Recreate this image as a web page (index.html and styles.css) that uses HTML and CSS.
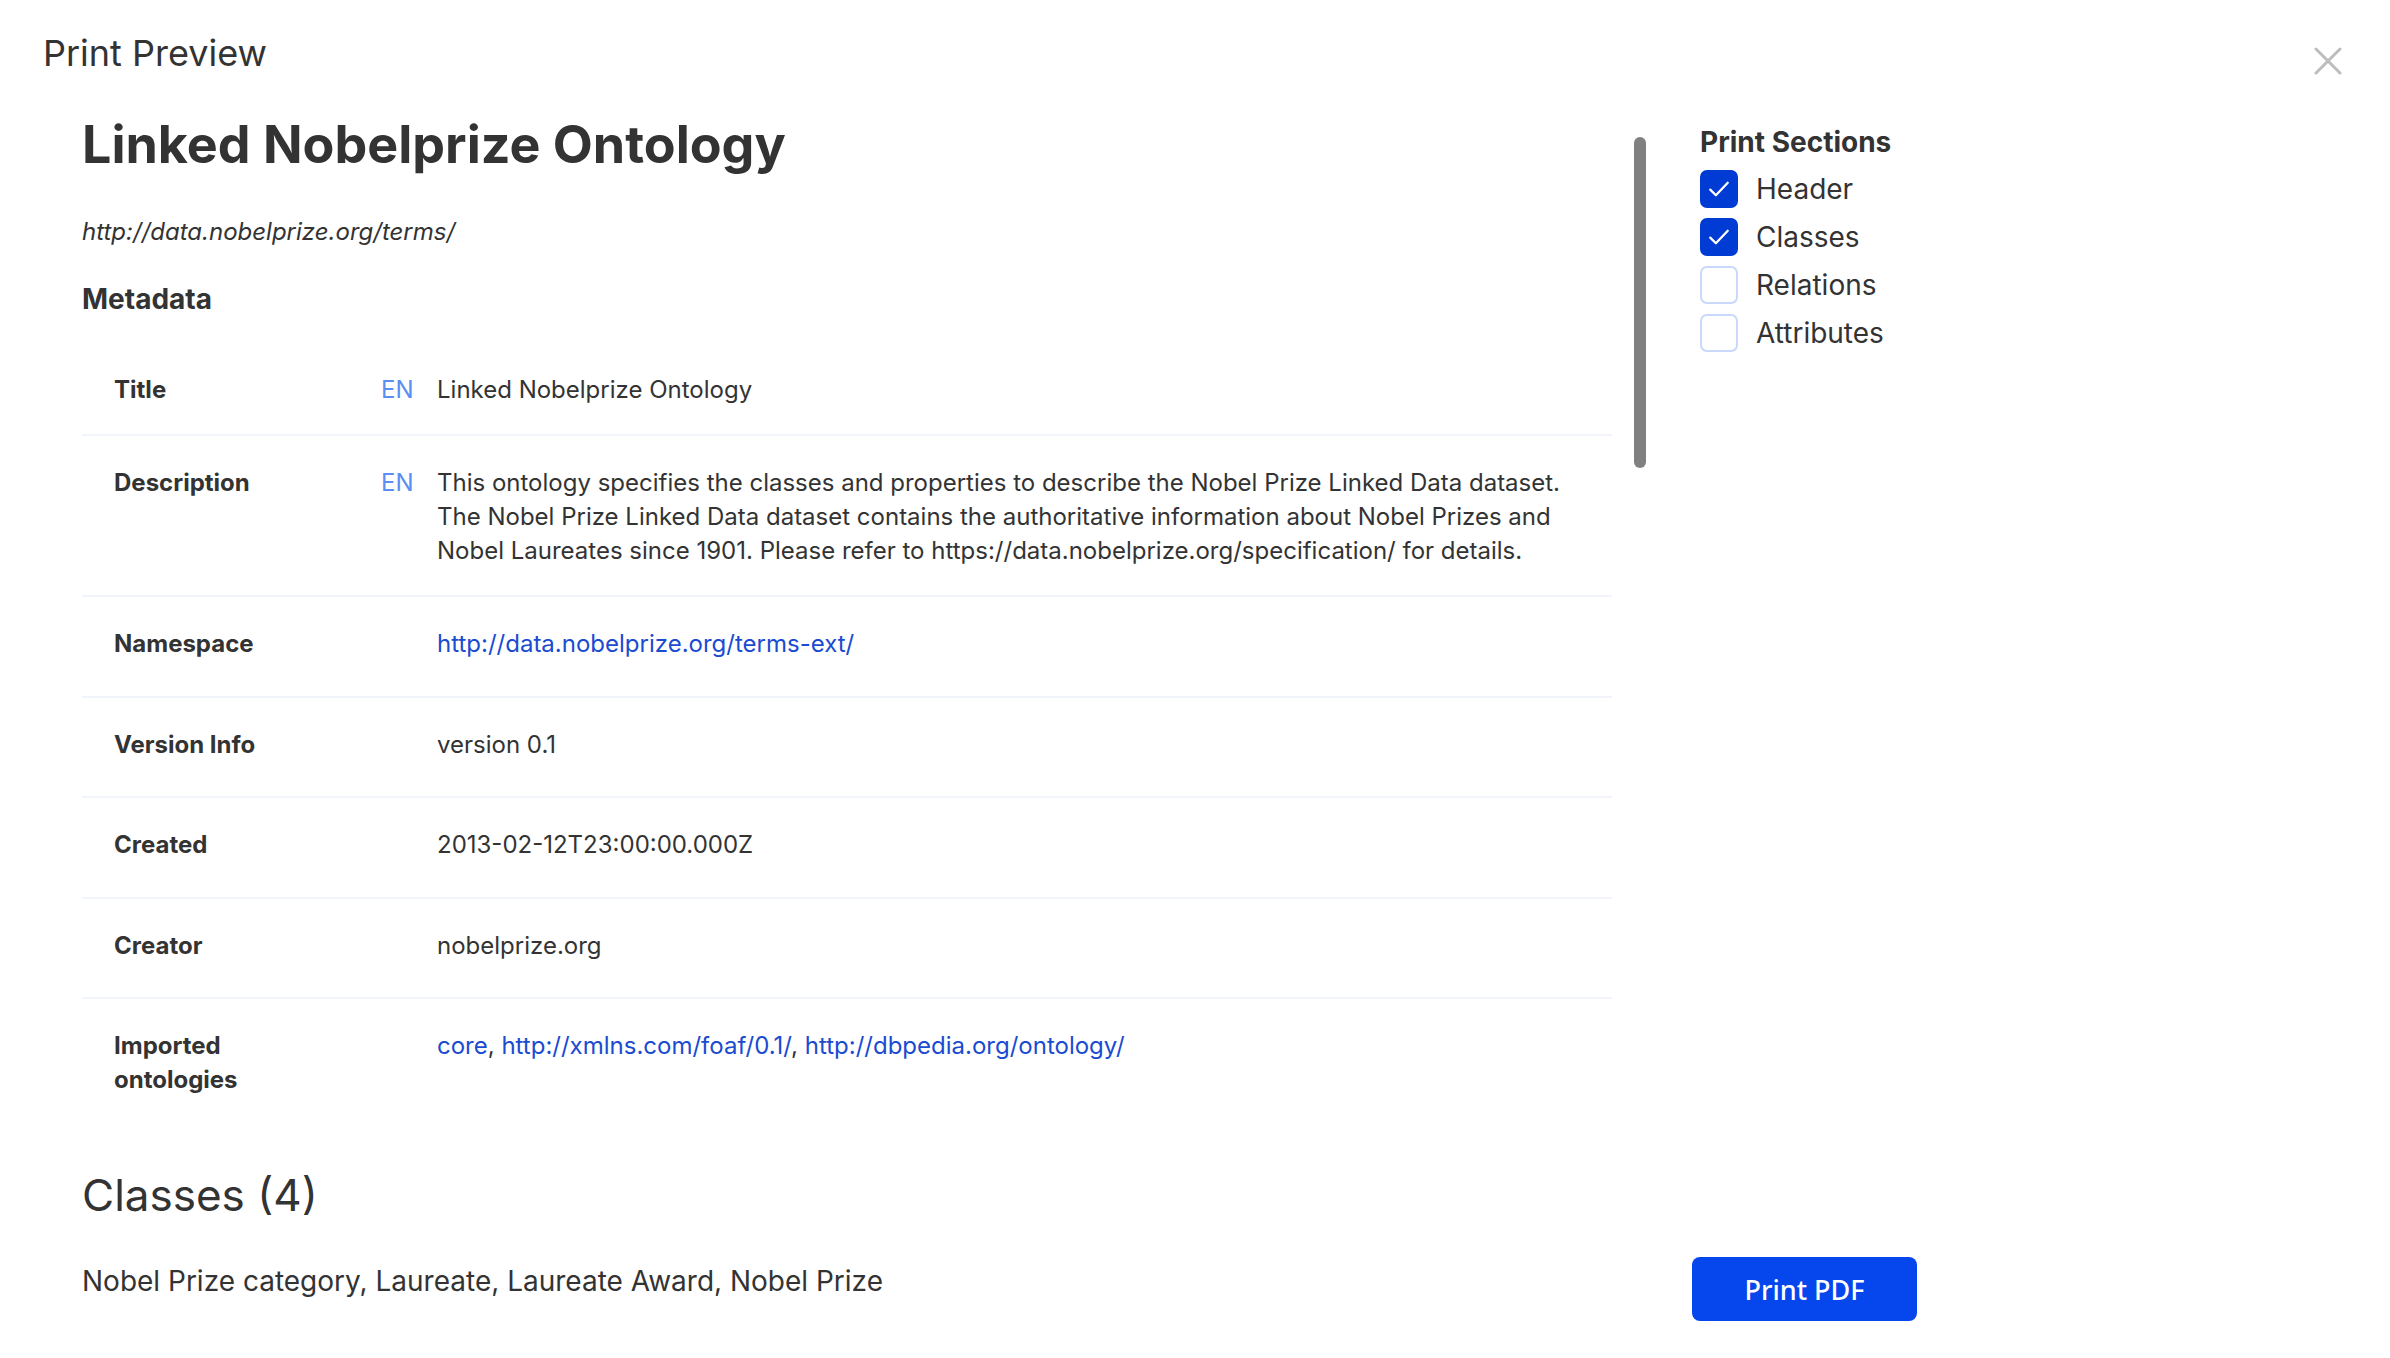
FILE: index.html
```html
<!DOCTYPE html>
<html lang="en">
<head>
  <meta charset="UTF-8" />
  <meta name="viewport" content="width=device-width,initial-scale=1.0"/>
  <title>Print Preview</title>
  <link rel="stylesheet" href="styles.css">
</head>
<body>
  <div class="modal">
    <header class="modal-header">
      <h2>Print Preview</h2>
      <button class="close" aria-label="Close">
        <svg viewBox="0 0 28 28" width="28" height="28">
          <path d="M2 2 L26 26 M26 2 L2 26" stroke="#bdbdbd" stroke-width="3" stroke-linecap="round" fill="none"/>
        </svg>
      </button>
    </header>

    <div class="modal-body">
      <div class="preview">
        <div class="doc">
          <h1>Linked Nobelprize Ontology</h1>
          <p class="iri">http://data.nobelprize.org/terms/</p>
          <h3>Metadata</h3>

          <div class="meta">
            <div class="meta-row lang-row">
              <div class="meta-label">Title</div>
              <div class="meta-lang">EN</div>
              <div class="meta-value">Linked Nobelprize Ontology</div>
            </div>
            <div class="meta-row lang-row">
              <div class="meta-label">Description</div>
              <div class="meta-lang">EN</div>
              <div class="meta-value">This ontology specifies the classes and properties to describe the Nobel Prize Linked Data dataset. The Nobel Prize Linked Data dataset contains the authoritative information about Nobel Prizes and Nobel Laureates since 1901. Please refer to https://data.nobelprize.org/specification/ for details.</div>
            </div>
            <div class="meta-row">
              <div class="meta-label">Namespace</div>
              <div class="meta-lang"></div>
              <div class="meta-value"><a href="#">http://data.nobelprize.org/terms-ext/</a></div>
            </div>
            <div class="meta-row">
              <div class="meta-label">Version Info</div>
              <div class="meta-lang"></div>
              <div class="meta-value">version 0.1</div>
            </div>
            <div class="meta-row">
              <div class="meta-label">Created</div>
              <div class="meta-lang"></div>
              <div class="meta-value">2013-02-12T23:00:00.000Z</div>
            </div>
            <div class="meta-row">
              <div class="meta-label">Creator</div>
              <div class="meta-lang"></div>
              <div class="meta-value">nobelprize.org</div>
            </div>
            <div class="meta-row last">
              <div class="meta-label">Imported ontologies</div>
              <div class="meta-lang"></div>
              <div class="meta-value"><a href="#">core</a>, <a href="#">http://xmlns.com/foaf/0.1/</a>, <a href="#">http://dbpedia.org/ontology/</a></div>
            </div>
          </div>

          <h2 class="section-title">Classes (4)</h2>
          <p class="section-list">Nobel Prize category, Laureate, Laureate Award, Nobel Prize</p>
        </div>
        <div class="scroll-thumb"></div>
      </div>

      <aside class="sections">
        <h3>Print Sections</h3>
        <label class="check"><span class="box checked"></span>Header</label>
        <label class="check"><span class="box checked"></span>Classes</label>
        <label class="check"><span class="box"></span>Relations</label>
        <label class="check"><span class="box"></span>Attributes</label>
        <button class="print-btn">Print PDF</button>
      </aside>
    </div>
  </div>
</body>
</html>
```

FILE: styles.css
```css
* {
  box-sizing: border-box;
}
body {
  margin: 0;
  background: #fff;
  color: #333;
  font-family: Inter, "Noto Sans", Arial, sans-serif;
}
.modal {
  height: 100vh;
  display: flex;
  flex-direction: column;
  overflow: hidden;
}
.modal-header {
  position: relative;
  height: 108px;
  flex: none;
  padding: 31px 0 0 43px;
}
.modal-header h2 {
  margin: 0;
  font-size: 36px;
  line-height: 44px;
  font-weight: 400;
}
.close {
  position: absolute;
  top: 47px;
  right: 48px;
  width: 28px;
  height: 28px;
  padding: 0;
  border: 0;
  background: none;
}
.close svg {
  display: block;
}

.modal-body {
  flex: 1;
  display: flex;
  min-height: 0;
  padding-left: 82px;
}
.preview {
  position: relative;
  width: 1564px;
  flex: none;
  padding-right: 34px;
  overflow: hidden;
}
.scroll-thumb {
  position: absolute;
  top: 29px;
  right: 0;
  width: 12px;
  height: 331px;
  border-radius: 6px;
  background: #808080;
}

.doc h1 {
  margin: 6px 0 0;
  font-size: 52px;
  line-height: 62px;
  font-weight: 700;
}
.iri {
  margin: 39px 0 0;
  font-size: 24px;
  line-height: 34px;
  font-style: italic;
}
.doc h3 {
  margin: 33px 0 0;
  font-size: 28px;
  line-height: 34px;
  font-weight: 700;
}

.meta {
  margin-top: 27px;
  font-size: 24px;
  line-height: 34px;
}
.meta-row {
  display: flex;
  padding: 30px 32px 34.6px;
  border-bottom: 2px solid #f1f5fb;
}
.meta-row.lang-row {
  padding-bottom: 27px;
}
.meta-row.last {
  border-bottom: 0;
}
.meta-label {
  width: 267px;
  flex: none;
  padding-right: 48px;
  font-weight: 700;
}
.meta-lang {
  width: 56px;
  flex: none;
  color: #5b8ef4;
}
.meta-value {
  flex: 1;
}
.meta-value a {
  color: #1a4bd1;
  text-decoration: none;
}

.section-title {
  margin: 37px 0 0;
  font-size: 44px;
  line-height: 52px;
  font-weight: 400;
}
.section-list {
  margin: 41px 0 0;
  font-size: 28px;
  line-height: 38px;
}

.sections {
  flex: none;
  width: 260px;
  margin-left: 54px;
  padding: 17px 0 37px;
  display: flex;
  flex-direction: column;
  gap: 10px;
}
.sections h3 {
  margin: 0 0 1px;
  font-size: 28px;
  line-height: 34px;
  font-weight: 700;
}
.check {
  display: flex;
  align-items: center;
  gap: 18px;
  height: 38px;
  font-size: 28px;
}
.box {
  width: 38px;
  height: 38px;
  border: 2px solid #c9d8fb;
  border-radius: 7px;
  background: #fff;
}
.box.checked {
  border-color: #003bd4;
  background: #003bd4 url("data:image/svg+xml,%3Csvg xmlns='http://www.w3.org/2000/svg' viewBox='0 0 24 24'%3E%3Cpath d='M5 12.5l4.5 4.5L19 7' fill='none' stroke='%23fff' stroke-width='1.8' stroke-linecap='round' stroke-linejoin='round'/%3E%3C/svg%3E") center / 30px no-repeat;
}
.print-btn {
  margin-top: auto;
  margin-left: -8px;
  width: 225px;
  height: 64px;
  border: 0;
  border-radius: 8px;
  background: #0546ed;
  color: #fff;
  font-family: "Noto Sans", Arial, sans-serif;
  font-size: 27px;
  font-weight: 500;
}
```
